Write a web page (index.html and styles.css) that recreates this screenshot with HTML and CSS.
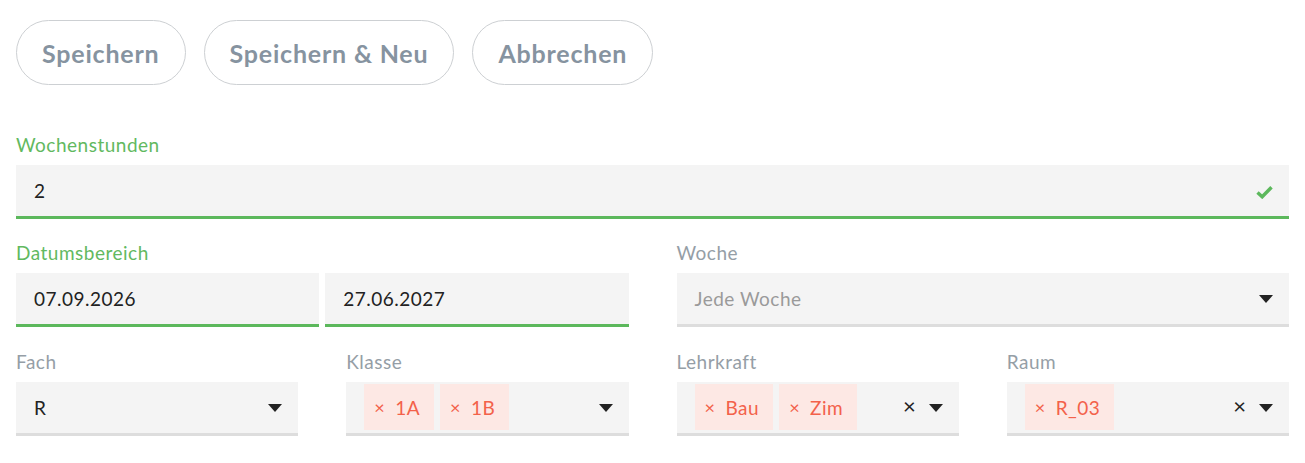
FILE: index.html
```html
<!DOCTYPE html>
<html lang="de">
<head>
<meta charset="utf-8">
<title>Unterricht</title>
<link rel="stylesheet" href="styles.css">
</head>
<body>
<div class="page">
  <div class="actions">
    <button class="btn">Speichern</button>
    <button class="btn">Speichern &amp; Neu</button>
    <button class="btn">Abbrechen</button>
  </div>

  <div class="field full">
    <label class="label valid">Wochenstunden</label>
    <div class="box valid-box">
      <span class="value">2</span>
      <svg class="check" width="17" height="14" viewBox="0 0 17 14"><path d="M1.5 7.5 L6.2 11.8 L15.5 2.2" fill="none" stroke="#5cb85c" stroke-width="3.4"/></svg>
    </div>
  </div>

  <div class="grid">
    <div class="field span2">
      <label class="label valid">Datumsbereich</label>
      <div class="pair">
        <div class="box valid-box"><span class="value">07.09.2026</span></div>
        <div class="box valid-box"><span class="value">27.06.2027</span></div>
      </div>
    </div>
    <div class="field span2">
      <label class="label">Woche</label>
      <div class="box select">
        <span class="placeholder">Jede Woche</span>
        <span class="controls"><span class="caret"></span></span>
      </div>
    </div>

    <div class="field">
      <label class="label">Fach</label>
      <div class="box select">
        <span class="value">R</span>
        <span class="controls"><span class="caret"></span></span>
      </div>
    </div>
    <div class="field">
      <label class="label">Klasse</label>
      <div class="box select multi">
        <span class="tags"><span class="tag"><span class="x">×</span>1A</span><span class="tag"><span class="x">×</span>1B</span></span>
        <span class="controls"><span class="caret"></span></span>
      </div>
    </div>
    <div class="field">
      <label class="label">Lehrkraft</label>
      <div class="box select multi">
        <span class="tags"><span class="tag"><span class="x">×</span>Bau</span><span class="tag"><span class="x">×</span>Zim</span></span>
        <span class="controls"><span class="clear">×</span><span class="caret"></span></span>
      </div>
    </div>
    <div class="field">
      <label class="label">Raum</label>
      <div class="box select multi">
        <span class="tags"><span class="tag"><span class="x">×</span>R_03</span></span>
        <span class="controls"><span class="clear">×</span><span class="caret"></span></span>
      </div>
    </div>
  </div>
</div>
</body>
</html>
```

FILE: styles.css
```css
* { box-sizing: border-box; }
html, body { margin: 0; padding: 0; background: #fff; }
body { font-family: Lato, "Open Sans", sans-serif; color: #222; }

.page { padding: 20px 16px 0 16px; }

.actions { display: flex; gap: 18px; margin-bottom: 50px; }
.btn {
  height: 65px;
  padding: 0 25px;
  border: 1px solid #cdd0d3;
  border-radius: 33px;
  background: #fff;
  font-family: Lato, sans-serif;
  font-weight: 700;
  font-size: 25px;
  letter-spacing: 0.8px;
  color: #8693a0;
}

.field { display: flex; flex-direction: column; }
.full { margin-bottom: 24px; }

.label {
  font-size: 19px;
  letter-spacing: 0.5px;
  line-height: 20px;
  height: 20px;
  margin-bottom: 10px;
  color: #959ea6;
}
.label.valid { color: #62b95f; }

.box {
  height: 54px;
  background: #f4f4f4;
  border-bottom: 3px solid #dddddd;
  display: flex;
  align-items: center;
  padding: 0 16px 0 18px;
  font-size: 19px;
  letter-spacing: 0.5px;
}
.valid-box { border-bottom-color: #5cb85c; }
.box .value { flex: 1; color: #222; }
.check { margin-right: 0; margin-top: 3px; }

.grid {
  display: grid;
  grid-template-columns: repeat(4, 1fr);
  column-gap: 48px;
  row-gap: 25px;
}
.span2 { grid-column: span 2; }
.pair { display: grid; grid-template-columns: 1fr 1fr; gap: 6px; }

.placeholder { flex: 1; color: #9a9a9a; }
.controls { display: flex; align-items: center; gap: 13px; }
.caret {
  width: 0; height: 0;
  border-left: 7px solid transparent;
  border-right: 7px solid transparent;
  border-top: 8px solid #222;
}
.clear { font-size: 22px; color: #222; line-height: 1; margin-top: -3px; letter-spacing: 0; }

.multi { padding-left: 18px; align-items: stretch; }
.multi .controls { align-self: center; }
.tags { flex: 1; display: flex; gap: 6px; padding: 2px 0 3px; }
.tag {
  display: flex;
  align-items: center;
  background: #fde8e4;
  color: #f3614a;
  padding: 0 14px 0 10px;
  font-size: 19px;
}
.tag .x { font-size: 18px; margin-right: 10px; }
```
